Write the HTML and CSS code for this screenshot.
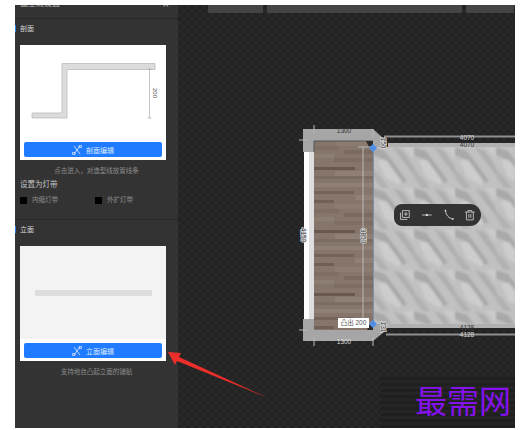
FILE: index.html
```html
<!DOCTYPE html>
<html lang="zh">
<head>
    <meta charset="UTF-8">
    <title>造型线设置</title>
    <link rel="stylesheet" href="styles.css">
</head>
<body>
<div class="shot">

    <!-- Left settings panel -->
    <aside class="panel">
        <div class="panel-head">
            <span>造型线设置</span>
            <span class="close">×</span>
        </div>

        <section class="group group-top">
            <h2 class="group-title">剖面</h2>
            <div class="card">
                <div class="preview">
                    <svg width="146" height="93" viewBox="0 0 146 93">
                        <path d="M12 68H42V18.500H135V24.500H47V73H12Z" fill="#dcdcdc" stroke="#b4b4b4" stroke-width="0.7"/>
                        <path d="M129.500 24V73M127.500 24H131.500M127.500 73H131.500" fill="none" stroke="#aaa" stroke-width="0.7"/>
                        <text class="dim" transform="translate(133 43) rotate(90)">200</text>
                    </svg>
                </div>
                <button class="edit-btn">
                    <svg class="edit-icon" width="10" height="10" viewBox="0 0 10 10"><path d="M2 1L8 9M8 1L2 9" fill="none" stroke="#cfe2ff" stroke-width="0.9"/><path d="M0.500 7.500H3V9.500H0.500ZM7 0.500H9.500V2.500H7Z" fill="none" stroke="#cfe2ff" stroke-width="0.8"/></svg>
                    剖面编辑
                </button>
            </div>
            <p class="hint">点击进入，对造型线放置线条</p>
            <h3 class="sub-title">设置为灯带</h3>
            <div class="checks">
                <label class="check"><i></i>内缩灯带</label>
                <label class="check"><i></i>外扩灯带</label>
            </div>
        </section>

        <section class="group">
            <h2 class="group-title">立面</h2>
            <div class="card">
                <div class="preview preview-grey"><div class="strip"></div></div>
                <button class="edit-btn">
                    <svg class="edit-icon" width="10" height="10" viewBox="0 0 10 10"><path d="M2 1L8 9M8 1L2 9" fill="none" stroke="#cfe2ff" stroke-width="0.9"/><path d="M0.500 7.500H3V9.500H0.500ZM7 0.500H9.500V2.500H7Z" fill="none" stroke="#cfe2ff" stroke-width="0.8"/></svg>
                    立面编辑
                </button>
            </div>
            <p class="hint">支持地台凸起立面的铺贴</p>
        </section>
    </aside>

    <!-- Canvas with floor plan -->
    <main class="canvas">
        <div class="topbar">
            <div class="top-seg seg-a"></div>
            <div class="top-seg seg-b"></div>
            <div class="top-seg seg-c"></div>
        </div>

        <svg class="plan" width="337" height="423" viewBox="178 5 337 423">
            <defs>
                <pattern id="marble" width="41" height="41" patternUnits="userSpaceOnUse" x="373" y="147">
                    <rect width="41" height="41" fill="#c1c1c1"/>
                    <path d="M5 14L16 10L30 30L26 38L12 30Z" fill="#cdcdcd"/>
                    <path d="M0 0L12 4L24 20L34 34L30 36L14 14L0 8Z" fill="#a9a9a9"/>
                    <path d="M20 0L30 4L41 20V28L30 14Z" fill="#afafaf"/>
                    <path d="M0 22L8 30L16 41H8L0 30Z" fill="#b2b2b2"/>
                    <path d="M30 0H41V12Z" fill="#cbcbcb"/>
                </pattern>
                <pattern id="wood" width="59" height="63" patternUnits="userSpaceOnUse" x="314" y="141">
                    <rect width="59" height="63" fill="#85756a"/>
                    <rect x="21" y="0" width="38" height="5" fill="#8c7c70"/>
                    <rect y="5" width="25" height="4" fill="#7e6e63"/>
                    <rect x="30" y="9" width="29" height="4" fill="#7a6a5f"/>
                    <rect y="13" width="20" height="4" fill="#8d7e72"/>
                    <rect x="20" y="17" width="39" height="4" fill="#7e6d62"/>
                    <rect y="26" width="41" height="3" fill="#6a594f"/>
                    <rect x="21" y="30" width="38" height="5" fill="#8f7f75"/>
                    <rect y="35" width="59" height="3" fill="#7c6d62"/>
                    <rect y="42" width="59" height="4" fill="#907f74"/>
                    <rect y="50" width="40" height="3" fill="#736358"/>
                    <rect x="41" y="54" width="18" height="5" fill="#8f7f74"/>
                    <rect y="59" width="20" height="3" fill="#6f5f54"/>
                </pattern>
                <filter id="soft" x="0" y="0" width="100%" height="100%">
                    <feGaussianBlur stdDeviation="0.9"/>
                </filter>
                <filter id="soft-wood" x="0" y="0" width="100%" height="100%">
                    <feGaussianBlur stdDeviation="0.6"/>
                </filter>
            </defs>

            <!-- wall frame -->
            <path d="M303 129H373L384 139V147H373V141H314V152H303Z" fill="#a6a6a6"/>
            <path d="M303 319H314V330H373V324H384V332L373 341H303Z" fill="#a6a6a6"/>
            <rect x="304" y="152" width="5" height="167" fill="#fff"/>
            <rect x="309" y="152" width="5" height="167" fill="#dedede"/>
            <rect x="373" y="147" width="142" height="177" fill="#c1c1c1"/>
            <rect x="314" y="141" width="59" height="189" fill="#85756a"/>
            <rect x="314" y="141" width="59" height="189" fill="url(#wood)" filter="url(#soft-wood)"/>
            <rect x="373" y="147" width="142" height="177" fill="url(#marble)" filter="url(#soft)"/>
            <path d="M373.500 147V324" stroke="#7e8fae" stroke-width="1"/>
            <path d="M314 141H373M314 141V152" fill="none" stroke="#555" stroke-width="1"/>
            <path d="M366 141H373V147L369 147Z" fill="#2b2b2b"/>
            <path d="M367 330H373V325L369 325Z" fill="#2b2b2b"/>

            <!-- dimension lines -->
            <g class="dim-lines">
                <path d="M314 125V133M373 129V137M299 140H308M358 147H371M363 147V318"/>
                <path d="M314 337V346M373 337V346M299 330H308"/>
            </g>
            <path d="M384 136.500H515" stroke="#8f8f8f" stroke-width="2"/>
            <rect x="388" y="143" width="127" height="4" fill="#b0b0b0"/>
            <rect x="386" y="324" width="129" height="4" fill="#b0b0b0"/>
            <path d="M386 334.500H515" stroke="#8f8f8f" stroke-width="2"/>
            <path d="M373 144L377 148L373 152L369 148Z" fill="#4d8fe8"/>
            <path d="M373 320L377 324L373 328L369 324Z" fill="#4d8fe8"/>

            <!-- dimension labels -->
            <g class="plan-text">
                <text x="344" y="133">1300</text>
                <text class="pale" x="344" y="344">1300</text>
                <text class="pale" x="467" y="139.500">4070</text>
                <text x="467" y="146.500">4070</text>
                <text x="467" y="330">4128</text>
                <text class="pale" x="467" y="337">4128</text>
                <text class="halo" transform="translate(380.500 143) rotate(90)">150</text>
                <text class="halo" transform="translate(380.500 327) rotate(90)">131</text>
                <text class="halo" transform="translate(360.500 236) rotate(90)">3850</text>
                <text class="halo" transform="translate(300.500 235) rotate(90)">4150</text>
            </g>

            <!-- red arrow -->
            <path d="M168 352L181 353L179 357L268 398L177 361L175 365Z" fill="#ec2f2a"/>
        </svg>

        <div class="bump-tag">凸出 <span>200</span></div>

        <div class="float-bar">
            <svg width="12" height="12" viewBox="0 0 12 12"><path d="M3.500 1.500H10.500V8.500H3.500ZM1.500 3.500V10.500H8.500M7 3V7M5 5H9" fill="none" stroke="#c8c8c8" stroke-width="0.9"/></svg>
            <svg width="12" height="12" viewBox="0 0 12 12"><path d="M1 6H11" stroke="#c8c8c8" stroke-width="0.9"/><path d="M5 5H7V7H5Z" fill="#ddd"/></svg>
            <svg width="12" height="12" viewBox="0 0 12 12"><path d="M2.500 1.500C3 6 6 9.500 10 10" fill="none" stroke="#c8c8c8" stroke-width="1"/><circle cx="2.500" cy="1.500" r="0.900" fill="#ddd"/><circle cx="10" cy="10" r="0.900" fill="#ddd"/></svg>
            <svg width="12" height="12" viewBox="0 0 12 12"><path d="M1 3H11M4 3V1.500H8V3M2.500 3V11H9.500V3M5 5V9M7 5V9" fill="none" stroke="#c8c8c8" stroke-width="0.9"/></svg>
        </div>

        <div class="watermark">最需网</div>
    </main>
</div>
</body>
</html>
```

FILE: styles.css
```css
/* General */
html, body {
    margin: 0;
    background: #fff;
}

body {
    font-family: "Liberation Sans", "Noto Sans CJK SC", sans-serif;
    color: #ccc;
}

.shot {
    display: flex;
    width: 500px;
    height: 423px;
    margin: 5px 0 0 15px;
    overflow: hidden;
}

/* Left panel */
.panel {
    width: 163px;
    flex: none;
    background: #333;
}

.panel-head {
    display: flex;
    justify-content: space-between;
    box-sizing: border-box;
    height: 14px;
    padding: 0 9px 0 5px;
    border-bottom: 1px solid #292929;
    overflow: hidden;
    font-size: 8px;
    line-height: 10px;
    color: #bbb;
}

.panel-head span {
    margin-top: -6px;
}

.panel-head .close {
    font-size: 11px;
}

.group {
    padding: 6px 0 0;
}

.group-top {
    height: 201px;
    box-sizing: border-box;
    border-bottom: 1px solid #292929;
}

.group-title {
    margin: 0 0 13px;
    padding-left: 4px;
    border-left: 1.500px solid #2a7de1;
    height: 7px;
    font-size: 7px;
    line-height: 7px;
    font-weight: normal;
    color: #d5d5d5;
}

.card {
    width: 146px;
    height: 115px;
    margin-left: 5px;
    background: #fff;
    position: relative;
}

.preview {
    height: 93px;
}

.preview svg {
    display: block;
}

.preview-grey {
    display: flex;
    align-items: center;
    justify-content: center;
    background: #f3f3f3;
}

.strip {
    width: 117px;
    height: 6px;
    background: #dddddd;
}

.dim {
    font-size: 6px;
    fill: #555;
}

.edit-btn {
    display: flex;
    align-items: center;
    justify-content: center;
    gap: 4px;
    width: 138px;
    height: 15px;
    margin: 4px 0 0 4px;
    padding: 0;
    border: none;
    border-radius: 2px;
    background: #1f7bff;
    color: #dbe9ff;
    font-family: inherit;
    font-size: 7px;
}

.hint {
    margin: 6px 0 0;
    text-align: center;
    font-size: 6.500px;
    line-height: 10px;
    color: #8c8c8c;
}

.sub-title {
    margin: 4px 0 0 5px;
    font-size: 7.500px;
    line-height: 10px;
    font-weight: normal;
    color: #c4c4c4;
}

.checks {
    display: flex;
    margin: 6px 0 0 5px;
}

.check {
    display: flex;
    align-items: center;
    gap: 5px;
    width: 75px;
    font-size: 6.500px;
    line-height: 8px;
    color: #8c8c8c;
}

.check i {
    display: block;
    width: 7px;
    height: 7px;
    background: #000;
}

/* Canvas */
.canvas {
    flex: 1;
    position: relative;
    background-color: #282828;
    background-image:
        linear-gradient(45deg, #232323 25%, transparent 25%, transparent 75%, #232323 75%),
        linear-gradient(45deg, #232323 25%, transparent 25%, transparent 75%, #232323 75%);
    background-size: 8px 8px;
    background-position: 0 0, 4px 4px;
}

.topbar {
    display: flex;
    gap: 4px;
    margin-left: 30px;
}

.top-seg {
    height: 8px;
    background: #444;
    border-radius: 0 0 1px 1px;
}

.seg-a { width: 55px; }
.seg-b { width: 195px; }
.seg-c { width: 48px; }

.plan {
    position: absolute;
    left: 0;
    top: 0;
    overflow: visible;
}

.dim-lines path {
    fill: none;
    stroke: #b9b9b9;
    stroke-width: 1;
}

.plan-text text {
    font-size: 6.500px;
    text-anchor: middle;
    fill: #333;
}

.plan-text text.pale {
    fill: #dcdcdc;
}

.plan-text text.halo {
    paint-order: stroke;
    stroke: #d8d8d8;
    stroke-width: 1.500px;
}

.bump-tag {
    position: absolute;
    left: 160px;
    top: 313px;
    width: 31px;
    height: 10px;
    background: #fff;
    font-size: 6.500px;
    line-height: 10px;
    text-align: center;
    color: #555;
}

.float-bar {
    position: absolute;
    left: 216px;
    top: 199px;
    display: flex;
    align-items: center;
    gap: 10px;
    box-sizing: border-box;
    width: 87px;
    height: 22px;
    padding: 0 5px;
    border-radius: 8px 11px 11px 8px;
    background: #333;
}

.float-bar svg {
    display: block;
}

.watermark {
    position: absolute;
    left: 202px;
    top: 370px;
    width: 135px;
    height: 53px;
    box-sizing: border-box;
    padding: 4px 0 0 35px;
    background: repeating-linear-gradient(0deg, #1f1f1f 0, #1f1f1f 3px, #252525 3px, #252525 6px);
    font-family: "Noto Sans CJK SC", sans-serif;
    font-size: 32px;
    line-height: 40px;
    white-space: nowrap;
    color: #8512ee;
}
```
